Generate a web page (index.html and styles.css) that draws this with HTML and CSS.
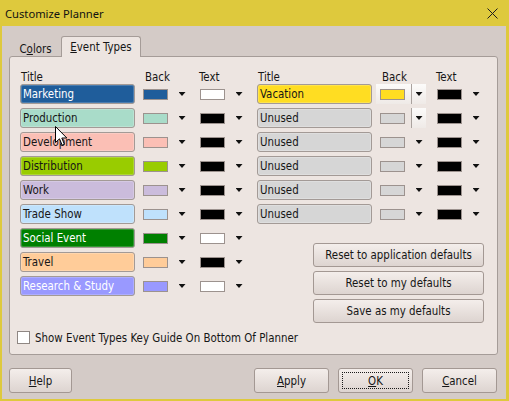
FILE: index.html
```html
<!DOCTYPE html>
<html lang="en">
<head>
    <meta charset="UTF-8">
    <title>Customize Planner</title>
    <link rel="stylesheet" href="styles.css">
</head>
<body>
<div class="window">
    <div class="titlebar">
        <span class="title">Customize Planner</span>
        <svg class="close" width="11" height="11" viewBox="0 0 11 11">
            <path d="M0.5 0.5 L10.5 10.5 M10.5 0.5 L0.5 10.5" stroke="#1c1c1c" stroke-width="1" fill="none"/>
        </svg>
    </div>
    <div class="client">
        <div class="tabs">
            <div class="tab">C<u>o</u>lors</div>
            <div class="tab active"><u>E</u>vent Types</div>
        </div>
        <div class="panel">
            <div class="columns">
                <div class="group">
                    <div class="head"><span class="h-title">Title</span><span class="h-back">Back</span><span class="h-text">Text</span></div>
                    <div class="row">
                        <div class="field" style="background:#1f5d9b;color:#fff">Marketing</div>
                        <div class="combo"><div class="cbox"><span class="swatch" style="background:#1f5d9b"></span><span class="drop"><i></i></span></div></div>
                        <div class="combo"><div class="cbox"><span class="swatch" style="background:#fff"></span><span class="drop"><i></i></span></div></div>
                    </div>
                    <div class="row">
                        <div class="field" style="background:#a9dcc9">Production</div>
                        <div class="combo"><div class="cbox"><span class="swatch" style="background:#a9dcc9"></span><span class="drop"><i></i></span></div></div>
                        <div class="combo"><div class="cbox"><span class="swatch" style="background:#000"></span><span class="drop"><i></i></span></div></div>
                    </div>
                    <div class="row">
                        <div class="field" style="background:#fbbfb5">Development</div>
                        <div class="combo"><div class="cbox"><span class="swatch" style="background:#fbbfb5"></span><span class="drop"><i></i></span></div></div>
                        <div class="combo"><div class="cbox"><span class="swatch" style="background:#000"></span><span class="drop"><i></i></span></div></div>
                    </div>
                    <div class="row">
                        <div class="field" style="background:#99cc00">Distribution</div>
                        <div class="combo"><div class="cbox"><span class="swatch" style="background:#99cc00"></span><span class="drop"><i></i></span></div></div>
                        <div class="combo"><div class="cbox"><span class="swatch" style="background:#000"></span><span class="drop"><i></i></span></div></div>
                    </div>
                    <div class="row">
                        <div class="field" style="background:#cbbcdc">Work</div>
                        <div class="combo"><div class="cbox"><span class="swatch" style="background:#cbbcdc"></span><span class="drop"><i></i></span></div></div>
                        <div class="combo"><div class="cbox"><span class="swatch" style="background:#000"></span><span class="drop"><i></i></span></div></div>
                    </div>
                    <div class="row">
                        <div class="field" style="background:#bfe1fc">Trade Show</div>
                        <div class="combo"><div class="cbox"><span class="swatch" style="background:#bfe1fc"></span><span class="drop"><i></i></span></div></div>
                        <div class="combo"><div class="cbox"><span class="swatch" style="background:#000"></span><span class="drop"><i></i></span></div></div>
                    </div>
                    <div class="row">
                        <div class="field" style="background:#008000;color:#fff">Social Event</div>
                        <div class="combo"><div class="cbox"><span class="swatch" style="background:#008000"></span><span class="drop"><i></i></span></div></div>
                        <div class="combo"><div class="cbox"><span class="swatch" style="background:#fff"></span><span class="drop"><i></i></span></div></div>
                    </div>
                    <div class="row">
                        <div class="field" style="background:#ffcc99">Travel</div>
                        <div class="combo"><div class="cbox"><span class="swatch" style="background:#ffcc99"></span><span class="drop"><i></i></span></div></div>
                        <div class="combo"><div class="cbox"><span class="swatch" style="background:#000"></span><span class="drop"><i></i></span></div></div>
                    </div>
                    <div class="row">
                        <div class="field" style="background:#9999ff;color:#fff">Research &amp; Study</div>
                        <div class="combo"><div class="cbox"><span class="swatch" style="background:#9999ff"></span><span class="drop"><i></i></span></div></div>
                        <div class="combo"><div class="cbox"><span class="swatch" style="background:#fff"></span><span class="drop"><i></i></span></div></div>
                    </div>
                </div>
                <div class="group">
                    <div class="head"><span class="h-title">Title</span><span class="h-back">Back</span><span class="h-text">Text</span></div>
                    <div class="row">
                        <div class="field" style="background:#ffdd22">Vacation</div>
                        <div class="combo"><div class="cbox hot"><span class="swatch" style="background:#ffdd22"></span><span class="drop"><i></i></span></div></div>
                        <div class="combo"><div class="cbox"><span class="swatch" style="background:#000"></span><span class="drop"><i></i></span></div></div>
                    </div>
                    <div class="row">
                        <div class="field unused">Unused</div>
                        <div class="combo"><div class="cbox split"><span class="swatch" style="background:#d6d6d6"></span><span class="drop"><i></i></span></div></div>
                        <div class="combo"><div class="cbox"><span class="swatch" style="background:#000"></span><span class="drop"><i></i></span></div></div>
                    </div>
                    <div class="row">
                        <div class="field unused">Unused</div>
                        <div class="combo"><div class="cbox"><span class="swatch" style="background:#d6d6d6"></span><span class="drop"><i></i></span></div></div>
                        <div class="combo"><div class="cbox"><span class="swatch" style="background:#000"></span><span class="drop"><i></i></span></div></div>
                    </div>
                    <div class="row">
                        <div class="field unused">Unused</div>
                        <div class="combo"><div class="cbox"><span class="swatch" style="background:#d6d6d6"></span><span class="drop"><i></i></span></div></div>
                        <div class="combo"><div class="cbox"><span class="swatch" style="background:#000"></span><span class="drop"><i></i></span></div></div>
                    </div>
                    <div class="row">
                        <div class="field unused">Unused</div>
                        <div class="combo"><div class="cbox"><span class="swatch" style="background:#d6d6d6"></span><span class="drop"><i></i></span></div></div>
                        <div class="combo"><div class="cbox"><span class="swatch" style="background:#000"></span><span class="drop"><i></i></span></div></div>
                    </div>
                    <div class="row">
                        <div class="field unused">Unused</div>
                        <div class="combo"><div class="cbox"><span class="swatch" style="background:#d6d6d6"></span><span class="drop"><i></i></span></div></div>
                        <div class="combo"><div class="cbox"><span class="swatch" style="background:#000"></span><span class="drop"><i></i></span></div></div>
                    </div>
                    <div class="actions">
                        <button class="btn wide">Reset to application defaults</button>
                        <button class="btn wide">Reset to my defaults</button>
                        <button class="btn wide">Save as my defaults</button>
                    </div>
                </div>
            </div>
            <label class="check"><span class="checkbox"></span>Show Event Types Key Guide On Bottom Of Planner</label>
        </div>
        <div class="footer">
            <button class="btn help"><u>H</u>elp</button>
            <div class="right">
                <button class="btn"><u>A</u>pply</button>
                <button class="btn default"><u>O</u>K</button>
                <button class="btn"><u>C</u>ancel</button>
            </div>
        </div>
    </div>

    <!-- mouse pointer -->
    <svg class="cursor" width="13" height="21" viewBox="0 0 13 21">
        <path d="M0.5 0.5 L0.5 16.5 L4.5 12.8 L7.2 19.2 L9.4 18.3 L6.8 12 L11.8 12 Z" fill="#fff" stroke="#000" stroke-width="1" stroke-linejoin="miter"/>
    </svg>
</div>
</body>
</html>
```

FILE: styles.css
```css
body {
    margin: 0;
    font-family: "DejaVu Sans Condensed", "DejaVu Sans", sans-serif;
    font-size: 11.4px;
    color: #161616;
}
.window {
    position: relative;
    width: 509px;
    height: 401px;
    box-sizing: border-box;
    padding: 0 3px 2px 2px;
    background-color: #dec93d;
    display: flex;
    flex-direction: column;
    overflow: hidden;
}
.titlebar {
    height: 26px;
    flex: none;
    display: flex;
    align-items: center;
    justify-content: space-between;
    padding: 0 8px 0 3px;
}
.title {
    font-family: "Noto Sans", sans-serif;
    font-size: 11.2px;
    color: #111;
}
.client {
    flex: 1;
    background-color: #d4cbc7;
    padding: 10px 0 0 7px;
}
.tabs {
    display: flex;
    align-items: flex-end;
    height: 20px;
    padding-left: 1px;
    position: relative;
    z-index: 1;
}
.tab {
    width: 51px;
    height: 16px;
    box-sizing: border-box;
    text-align: center;
    line-height: 16px;
    padding-top: 1px;
}
.tab.active {
    width: 80px;
    height: 21px;
    line-height: 18px;
    margin-bottom: -1px;
    background-color: #ede5e1;
    border: 1px solid #a59c98;
    border-bottom: none;
    border-radius: 3px 3px 0 0;
}
.panel {
    width: 489px;
    height: 299px;
    box-sizing: border-box;
    background-color: #ede5e1;
    border: 1px solid #a59c98;
    border-radius: 3px;
    padding: 13px 0 0 10px;
}
.columns {
    display: flex;
    align-items: flex-start;
}
.group {
    display: flex;
    flex-direction: column;
}
.head {
    display: flex;
    height: 14px;
    line-height: 14px;
}
.h-title {
    width: 122px;
    padding-left: 1px;
}
.h-back {
    width: 55px;
    padding-left: 2px;
}
.h-text {
    margin-left: -1px;
}
.row {
    display: flex;
    align-items: center;
    height: 20px;
    margin-bottom: 4px;
}
.field {
    width: 115px;
    height: 20px;
    box-sizing: border-box;
    margin-right: 8px;
    border: 1px solid #a39a96;
    border-radius: 3px;
    padding-left: 2px;
    line-height: 18px;
    white-space: nowrap;
    box-shadow: inset 0 0 0 1px rgba(255, 255, 255, 0.2);
}
.field.unused {
    background-color: #d6d6d6;
}
.combo {
    width: 57px;
    height: 20px;
    display: flex;
}
.cbox {
    display: flex;
    align-items: center;
    height: 20px;
    margin-left: -4px;
    padding-left: 4px;
}
.swatch {
    width: 25px;
    height: 11px;
    box-sizing: border-box;
    border: 1px solid #9c928e;
}
.drop {
    width: 15px;
    height: 20px;
    box-sizing: border-box;
    margin-left: 6px;
    display: flex;
    align-items: center;
    justify-content: center;
    border-left: 1px solid transparent;
}
.drop i {
    width: 7px;
    height: 4px;
    background-color: #111;
    clip-path: polygon(0 0, 100% 0, 50% 100%);
}
.cbox.hot {
    background: linear-gradient(#fcfbfa, #efeae7);
}
.cbox.hot .drop,
.cbox.split .drop {
    border-left-color: #aaa29e;
}
.cbox.split .drop {
    background: linear-gradient(#fcfbfa, #efeae7);
}
.actions {
    display: flex;
    flex-direction: column;
    margin-top: 15px;
    padding-left: 56px;
}
.btn {
    font-family: inherit;
    font-size: 11.4px;
    color: #161616;
    height: 25px;
    width: 75px;
    padding: 0;
    box-sizing: border-box;
    border: 1px solid #a39893;
    border-radius: 3px;
    background: linear-gradient(#f4eeeb, #ddd4d0);
    position: relative;
}
.btn.wide {
    width: 171px;
    height: 24px;
    margin-bottom: 4px;
}
.btn.help {
    width: 63px;
}
.btn.default::after {
    content: "";
    position: absolute;
    left: 3px;
    top: 3px;
    right: 3px;
    bottom: 3px;
    border: 1px dotted #1a1a1a;
}
.check {
    display: flex;
    align-items: center;
    height: 13px;
    margin-top: 4px;
    margin-left: -3px;
}
.checkbox {
    width: 13px;
    height: 13px;
    box-sizing: border-box;
    border: 1px solid #8f8783;
    background-color: #fff;
    margin-right: 5px;
}
.footer {
    display: flex;
    justify-content: space-between;
    width: 488px;
    margin-top: 13px;
}
.footer .right {
    display: flex;
    gap: 9px;
}
.cursor {
    position: absolute;
    left: 55px;
    top: 126px;
}
```
